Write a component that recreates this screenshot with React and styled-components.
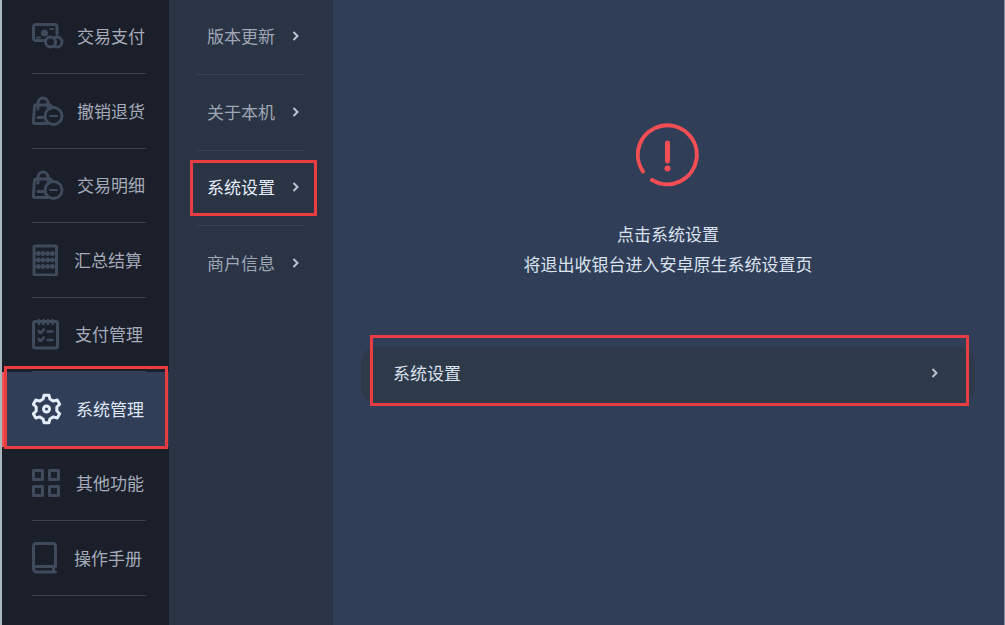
import styled, { createGlobalStyle } from 'styled-components'
import { useState } from 'react'

const GlobalStyle = createGlobalStyle`
  * {
    box-sizing: border-box;
  }
  body {
    margin: 0;
    background: #313e57;
    font-family: 'Noto Sans CJK SC', sans-serif;
  }
  button {
    font-family: inherit;
    cursor: pointer;
  }
`

const PayIcon = () => (
  <Icon width="32" height="32" viewBox="0 0 32 32">
    <path d="M14 20.5H4A2.500 2.500 0 0 1 1.500 18V7A2.500 2.500 0 0 1 4 4.500h18.500A2.500 2.500 0 0 1 25 7v7" />
    <path d="M5 17.500h3M18.500 9h2.500" strokeWidth="2" />
    <circle cx="12.500" cy="13" r="3.500" fill="currentColor" stroke="none" />
    <circle cx="25" cy="22" r="5" />
    <circle cx="18.500" cy="22" r="5" fill="#1a1f2a" />
  </Icon>
)

const BagIcon = () => (
  <Icon width="32" height="32" viewBox="0 0 32 32">
    <path d="M15 28.500H2.500a1.200 1.200 0 0 1-1.200-1.200L2.500 11.500A1.500 1.500 0 0 1 4 10h14.500l1 2" />
    <path d="M6 14V8a5 5 0 0 1 10 0v4" />
    <path d="M6 22.500h5" />
    <circle cx="21.500" cy="21" r="8.500" />
    <path d="M18 21h7" strokeWidth="2" />
  </Icon>
)

const AbacusIcon = () => (
  <Icon width="32" height="32" viewBox="0 0 32 32">
    <rect x="2" y="2" width="22.500" height="29" rx="1" />
    <path d="M3 9.500h21M3 16h21M3 22.500h21" strokeWidth="2" />
    <path
      d="M4.500 9.500h18M4.500 16h18M4.500 22.500h18"
      strokeWidth="4.500"
      strokeDasharray="3.500 1.200"
      strokeLinecap="butt"
    />
  </Icon>
)

const ChecklistIcon = () => (
  <Icon width="32" height="32" viewBox="0 0 32 32">
    <rect x="1.500" y="3.500" width="24" height="26.500" rx="2" />
    <path d="M7 2v4M11.500 2v4M16 2v4M20.500 2v4" strokeWidth="2.500" />
    <path d="M6.500 13l2 2 3.500-3.500M6.500 21l2 2 3.500-3.500M15.500 13.500h5M15.500 22h5" strokeWidth="2.500" />
  </Icon>
)

// six teeth, one every 60 degrees: [angle from the tooth's middle, radius]
const tooth = [[-10, 14], [10, 14], [19, 10.5], [41, 10.5]]
const gearPoints = [0, 60, 120, 180, 240, 300]
  .flatMap((turn) =>
    tooth.map(([angle, radius]) => {
      const a = ((turn + angle) * Math.PI) / 180
      return `${(14.5 + radius * Math.sin(a)).toFixed(2)},${(16 - radius * Math.cos(a)).toFixed(2)}`
    })
  )
  .join(' ')

const GearIcon = () => (
  <Icon width="32" height="32" viewBox="0 0 32 32">
    <polygon points={gearPoints} />
    <circle cx="14.500" cy="16" r="3" />
  </Icon>
)

const GridIcon = () => (
  <Icon width="32" height="32" viewBox="0 0 32 32">
    <path
      d="M1.500 3.500h9v9h-9zM17.500 3.500h9v9h-9zM1.500 19.500h9v9h-9zM17.500 19.500h9v9h-9z"
    />
  </Icon>
)

const BookIcon = () => (
  <Icon width="32" height="32" viewBox="0 0 32 32">
    <path d="M1.500 27V4A2.500 2.500 0 0 1 4 1.500h17A2.500 2.500 0 0 1 23.500 4v20.500H4.500a2.700 2.700 0 0 0 0 5.500H23.500M21.500 25v5" />
  </Icon>
)

const Arrow = () => (
  <ArrowIcon width="8" height="12" viewBox="0 0 8 12">
    <path d="M1.500 2l4 4-4 4" />
  </ArrowIcon>
)

const WarningIcon = () => (
  <Warning width="64" height="64" viewBox="0 0 64 64">
    <path d="M7 48.500A29.500 29.500 0 1 1 16 57" />
    <path d="M31.500 20v18" strokeWidth="5" />
    <circle cx="31.500" cy="45.500" r="3" fill="currentColor" stroke="none" />
  </Warning>
)

const mainItems = [
  { id: 'pay', label: '交易支付', icon: PayIcon, gap: 13 },
  { id: 'refund', label: '撤销退货', icon: BagIcon, gap: 13 },
  { id: 'detail', label: '交易明细', icon: BagIcon, gap: 13 },
  { id: 'settle', label: '汇总结算', icon: AbacusIcon, gap: 10 },
  { id: 'payManage', label: '支付管理', icon: ChecklistIcon, gap: 11 },
  { id: 'system', label: '系统管理', icon: GearIcon, gap: 12 },
  { id: 'other', label: '其他功能', icon: GridIcon, gap: 12 },
  { id: 'manual', label: '操作手册', icon: BookIcon, gap: 10 },
]

const subItems = [
  { id: 'version', label: '版本更新' },
  { id: 'about', label: '关于本机' },
  { id: 'settings', label: '系统设置' },
  { id: 'merchant', label: '商户信息' },
]

const App = () => {
  const [activeMain, setActiveMain] = useState('system')
  const [activeSub, setActiveSub] = useState('settings')

  return (
    <Wrapper>
      <GlobalStyle />
      <SideBar>
        {mainItems.map(({ id, label, icon: ItemIcon, gap }) => (
          <SideItem
            key={id}
            $active={id === activeMain}
            $gap={gap}
            onClick={() => setActiveMain(id)}
          >
            <ItemIcon />
            <span>{label}</span>
            {id === activeMain && <MainMark />}
          </SideItem>
        ))}
      </SideBar>
      <SubMenu>
        {subItems.map(({ id, label }) => (
          <SubItem key={id} $active={id === activeSub} onClick={() => setActiveSub(id)}>
            <span>{label}</span>
            <Arrow />
            {id === activeSub && <SubMark />}
          </SubItem>
        ))}
      </SubMenu>
      <Content>
        <WarningIcon />
        <Message>
          点击系统设置
          <br />
          将退出收银台进入安卓原生系统设置页
        </Message>
        <SettingButton>
          <span>系统设置</span>
          <Arrow />
          <SettingMark />
        </SettingButton>
      </Content>
    </Wrapper>
  )
}

export default App

const Wrapper = styled.div`
  display: flex;
  min-height: 100vh;
  border-left: 2px solid #a9b9bb;
  border-right: 1px solid #8a90a0;
`

const SideBar = styled.nav`
  display: grid;
  grid-auto-rows: 74px 75px;
  align-content: start;
  flex: 0 0 167px;
  background: #1a1f2a;
`

const SideItem = styled.button`
  position: relative;
  display: flex;
  align-items: center;
  gap: ${({ $gap }) => $gap}px;
  padding: 0 0 2px 30px;
  border: 0;
  background: ${({ $active }) => ($active ? '#313e57' : 'transparent')};
  box-shadow: ${({ $active }) => ($active ? 'inset 5px 0 #f0555c' : 'none')};
  color: ${({ $active }) => ($active ? '#dfe7f6' : '#a5abb9')};
  font-size: 17px;
  line-height: 24px;
  white-space: nowrap;

  & > svg {
    color: ${({ $active }) => ($active ? '#e4ebfa' : '#3f4b5d')};
  }

  &::after {
    content: '';
    position: absolute;
    left: 30px;
    right: 23px;
    bottom: 0;
    height: 1px;
    background: ${({ $active }) => ($active ? 'transparent' : '#3b404b')};
  }
`

const Icon = styled.svg`
  flex: none;
  fill: none;
  stroke: currentColor;
  stroke-width: 3;
  stroke-linecap: round;
  stroke-linejoin: round;
`

const SubMenu = styled.nav`
  display: grid;
  grid-auto-rows: 75px 76px;
  align-content: start;
  flex: 0 0 164px;
  background: #2a3445;
`

const SubItem = styled.button`
  position: relative;
  display: flex;
  align-items: center;
  justify-content: space-between;
  margin: 0 28px;
  padding: 0 5px 2px 10px;
  border: 0;
  border-bottom: 1px solid #394253;
  background: transparent;
  color: ${({ $active }) => ($active ? '#e8eefa' : '#9fa6b5')};
  font-size: 17px;
  line-height: 24px;
  white-space: nowrap;

  &:last-child {
    border-bottom-color: transparent;
  }
`

const ArrowIcon = styled.svg`
  flex: none;
  fill: none;
  stroke: #bcc3d0;
  stroke-width: 2;
`

const Content = styled.main`
  display: flex;
  flex-direction: column;
  align-items: center;
  flex: 1;
  padding: 123px 29px 0 28px;
  background: #313e57;
`

const Warning = styled.svg`
  color: #f24e54;
  fill: none;
  stroke: currentColor;
  stroke-width: 4;
  stroke-linecap: round;
`

const Message = styled.p`
  margin: 32px 0 68px;
  color: #dbe3f0;
  font-size: 17px;
  line-height: 30px;
  text-align: center;
`

const SettingButton = styled.button`
  position: relative;
  display: flex;
  align-items: center;
  justify-content: space-between;
  align-self: stretch;
  height: 56px;
  padding: 0 36px 4px 32px;
  border: 0;
  border-radius: 16px;
  background: #2e394a;
  color: #dbe3f0;
  font-size: 17px;
  line-height: 24px;
`

/* red frames drawn over the parts to click */
const Mark = styled.span`
  position: absolute;
  z-index: 1;
  border: 3px solid #e93d41;
  pointer-events: none;
`

const MainMark = styled(Mark)`
  inset: -6px 1px -2px 2px;
`

const SubMark = styled(Mark)`
  inset: 9px -12px 9px -7px;
`

const SettingMark = styled(Mark)`
  inset: -12px 6px -3px 9px;
`
